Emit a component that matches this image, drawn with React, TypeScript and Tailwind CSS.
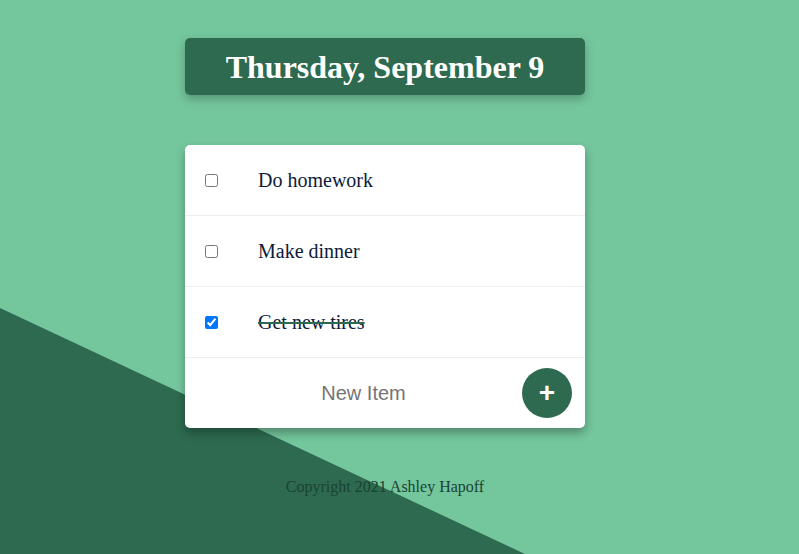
import React from "react";

const items = [
  { text: "Do homework", done: false },
  { text: "Make dinner", done: false },
  { text: "Get new tires", done: true },
];

export default function App() {
  return (
    <div className="relative min-h-screen w-full overflow-hidden bg-[#74c69d] font-['Liberation_Serif',serif]">
      <div className="absolute inset-0 bg-[#2d6a4f] [clip-path:polygon(0_308px,525px_554px,0_554px)]" />
      <div className="relative flex w-[770px] flex-col items-center pt-[38px]">
        <div className="flex h-[57px] w-[400px] items-center justify-center rounded-[5px] bg-[#2d6a4f] shadow-[0_4px_10px_rgba(0,0,0,0.25)]">
          <h1 className="text-[32px] font-bold leading-none text-white">Thursday, September 9</h1>
        </div>
        <div className="mt-[50px] w-[400px] overflow-hidden rounded-[5px] bg-white shadow-[0_5px_10px_rgba(0,0,0,0.3)]">
          {items.map((it) => (
            <div key={it.text} className="flex h-[71px] items-center border-b border-[#eeeeee] pl-5">
              <input type="checkbox" defaultChecked={it.done} className="m-0 h-[13px] w-[13px]" />
              <span
                className={
                  "ml-10 text-[20px] text-[#0d1b3a] " +
                  (it.done ? "line-through decoration-[#2d6a4f] decoration-2" : "")
                }
              >
                {it.text}
              </span>
            </div>
          ))}
          <div className="flex h-[70px] items-center">
            <input
              placeholder="New Item"
              className="min-w-0 flex-1 bg-transparent pl-5 text-center font-['Liberation_Sans',sans-serif] text-[20px] text-[#333] outline-none placeholder:text-[#757575]"
            />
            <button className="mr-[13px] flex h-[50px] w-[50px] items-center justify-center rounded-full bg-[#2d6a4f] font-['Liberation_Sans',sans-serif] text-[28px] font-bold leading-none text-white">
              +
            </button>
          </div>
        </div>
        <p className="mt-[47px] text-[16px] text-[#1b4332]">Copyright 2021 Ashley Hapoff</p>
      </div>
    </div>
  );
}
